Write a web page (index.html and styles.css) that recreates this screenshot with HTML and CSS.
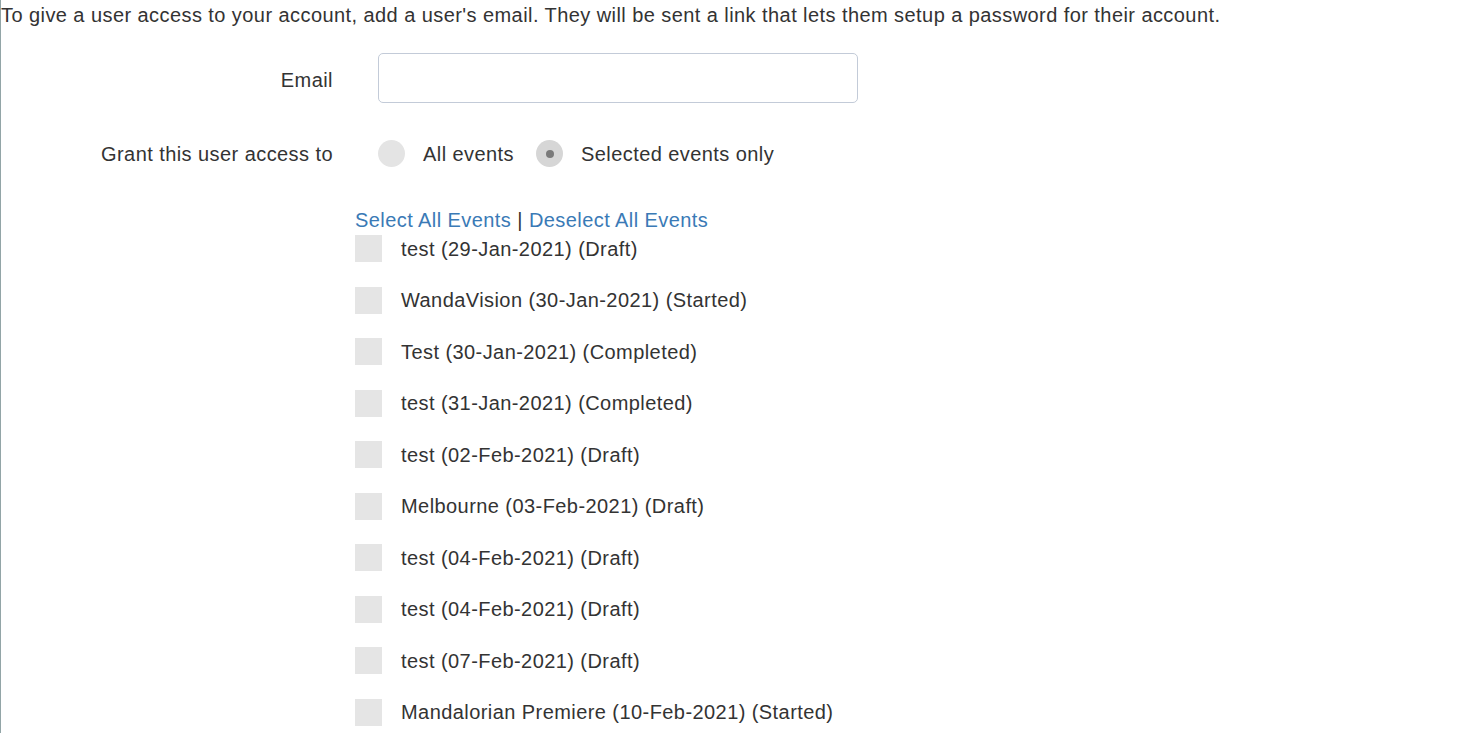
FILE: index.html
```html
<!DOCTYPE html>
<html lang="en">
<head>
<meta charset="utf-8">
<title>Add user</title>
<link rel="stylesheet" href="styles.css">
</head>
<body>
<div class="page">
  <p class="intro">To give a user access to your account, add a user's email. They will be sent a link that lets them setup a password for their account.</p>
  <form class="form">
    <div class="row row-email">
      <label class="label" for="email">Email</label>
      <input class="input" id="email" type="email">
    </div>
    <div class="row row-grant">
      <span class="label">Grant this user access to</span>
      <div class="radios">
        <label class="radio-opt"><span class="radio"></span><span class="radio-text">All events</span></label>
        <label class="radio-opt"><span class="radio radio-on"><span class="dot"></span></span><span class="radio-text">Selected events only</span></label>
      </div>
    </div>
    <div class="events">
      <div class="links"><a class="link" href="#">Select All Events</a> | <a class="link" href="#">Deselect All Events</a></div>
      <ul class="event-list">
        <li class="event"><span class="check"></span><span>test (29-Jan-2021) (Draft)</span></li>
        <li class="event"><span class="check"></span><span>WandaVision (30-Jan-2021) (Started)</span></li>
        <li class="event"><span class="check"></span><span>Test (30-Jan-2021) (Completed)</span></li>
        <li class="event"><span class="check"></span><span>test (31-Jan-2021) (Completed)</span></li>
        <li class="event"><span class="check"></span><span>test (02-Feb-2021) (Draft)</span></li>
        <li class="event"><span class="check"></span><span>Melbourne (03-Feb-2021) (Draft)</span></li>
        <li class="event"><span class="check"></span><span>test (04-Feb-2021) (Draft)</span></li>
        <li class="event"><span class="check"></span><span>test (04-Feb-2021) (Draft)</span></li>
        <li class="event"><span class="check"></span><span>test (07-Feb-2021) (Draft)</span></li>
        <li class="event"><span class="check"></span><span>Mandalorian Premiere (10-Feb-2021) (Started)</span></li>
      </ul>
    </div>
  </form>
</div>
</body>
</html>
```

FILE: styles.css
```css
html, body {
  margin: 0;
  padding: 0;
  background: #fff;
}
body {
  font-family: "Liberation Sans", Arial, sans-serif;
  font-size: 20px;
  letter-spacing: 0.43px;
  color: #333;
}
.page {
  border-left: 1px solid #92a5a7;
  min-height: 100vh;
  box-sizing: border-box;
}
.intro {
  margin: 0;
  padding-top: 1px;
  line-height: 28px;
}
.form {
  margin: 24px 0 0;
}
.row {
  display: grid;
  grid-template-columns: 332px 1fr;
  column-gap: 45px;
  align-items: center;
}
.label {
  text-align: right;
  line-height: 22px;
}
.row-email .label {
  padding-top: 3px;
}
.input {
  width: 480px;
  height: 50px;
  box-sizing: border-box;
  border: 1px solid #c3cbd8;
  border-radius: 5px;
  font: inherit;
  padding: 6px 12px;
}
.row-grant {
  margin-top: 37px;
  height: 27px;
}
.radios {
  display: flex;
  align-items: center;
  gap: 22px;
}
.radio-opt {
  display: flex;
  align-items: center;
  gap: 18px;
  line-height: 22px;
}
.radio {
  width: 27px;
  height: 27px;
  border-radius: 50%;
  background: #e4e4e4;
  display: flex;
  align-items: center;
  justify-content: center;
}
.radio-on {
  background: #d6d6d6;
}
.dot {
  width: 8px;
  height: 8px;
  border-radius: 50%;
  background: #7a7a7a;
}
.events {
  margin-top: 42px;
  margin-left: 354px;
}
.links {
  line-height: 22px;
  margin-bottom: 4px;
}
.link {
  color: #3a7ab6;
  text-decoration: none;
}
.event-list {
  list-style: none;
  margin: 0;
  padding: 0;
  display: flex;
  flex-direction: column;
  gap: 24.56px;
}
.event {
  display: flex;
  align-items: center;
  gap: 19px;
  height: 27px;
  line-height: 22px;
}
.check {
  width: 27px;
  height: 27px;
  background: #e5e5e5;
  flex: none;
}
```
